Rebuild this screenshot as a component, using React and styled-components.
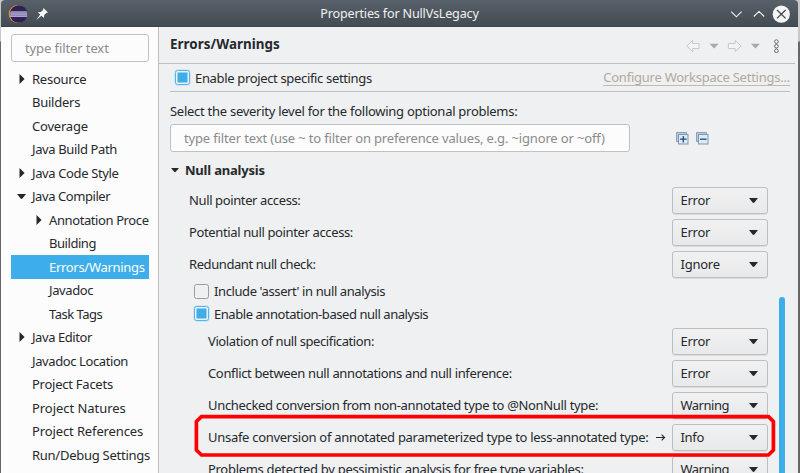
import React from "react";
import styled, { createGlobalStyle, css } from "styled-components";

const GlobalStyle = createGlobalStyle`
  *, *::before { box-sizing: border-box; }
  body { margin: 0; overflow: hidden; font-family: "Noto Sans", sans-serif; font-size: 13px; color: #26292c; }
`;

const Desktop = styled.div`
  width: 800px;
  height: 473px;
  overflow: hidden;
  padding: 0 2px 0 1px;
  background: linear-gradient(#c8c8c8 0 41px, #696765 42px);
`;

const Window = styled.div`
  position: relative;
  height: 473px;
  display: flex;
  flex-direction: column;
  overflow: hidden;
  border-radius: 4px 4px 0 0;
  background: #eff0f1;
`;

const TitleBar = styled.header`
  flex: none;
  display: grid;
  grid-template-columns: 100px 1fr 100px;
  align-items: center;
  height: 27px;
  background: linear-gradient(#586169, #434b53);
  border-bottom: 1px solid #3c4349;
  color: #eff0f1;
`;

const TitleIcons = styled.div`
  display: flex;
  align-items: center;
  gap: 8px;
  padding-left: 7px;
  svg { display: block; }
`;

const Title = styled.div`
  text-align: center;
  line-height: 27px;
  font-size: 12.6px;
  white-space: pre;
  letter-spacing: -0.18px;
`;

const WindowButtons = styled.div`
  display: flex;
  justify-content: flex-end;
  padding-right: 8px;
`;

const Body = styled.div`
  flex: 1;
  min-height: 0;
  display: grid;
  grid-template-columns: 158px 1fr;
`;

const Sidebar = styled.nav`
  min-width: 0;
  padding: 7px 9px 0 10px;
  background: #fcfcfc;
  border-right: 1px solid #bcbebf;
`;

const fieldStyle = css`
  height: 28px;
  border: 1px solid #bfc1c2;
  border-radius: 3px;
  background: #fcfcfc;
  color: #898b8c;
  line-height: 26px;
  padding-left: 13px;
  white-space: pre;
`;

const TreeFilter = styled.div`
  ${fieldStyle}
  width: 138px;
  letter-spacing: -0.1px;
`;

const Tree = styled.div`
  padding-top: 5.2px;
`;

const TreeRow = styled.div`
  display: flex;
  align-items: center;
  height: 23.5px;
  padding-left: ${(p) => 4 + p.$level * 17}px;
  background: ${(p) => (p.$selected ? "#3daee9" : "transparent")};
  color: ${(p) => (p.$selected ? "#fcfcfc" : "inherit")};
`;

const TwistySlot = styled.span`
  flex: none;
  display: flex;
  justify-content: center;
  width: 13px;
  margin-right: 4px;
`;

const Label = styled.span`
  white-space: pre;
  line-height: 20px;
  letter-spacing: ${(p) => p.$track || 0}px;
`;

const Page = styled.main`
  display: flex;
  flex-direction: column;
  min-width: 0;
`;

const PageHeader = styled.div`
  flex: none;
  display: flex;
  justify-content: space-between;
  height: 37px;
  margin-right: 3px;
  padding: 0 15px 0 11px;
  border-bottom: 1px solid #bcbebf;
`;

const PageTitle = styled.h1`
  margin: 0;
  font-size: 13.4px;
  font-weight: 700;
  line-height: 35px;
  letter-spacing: 0.05px;
`;

const ScopeRow = styled.div`
  flex: none;
  display: flex;
  align-items: center;
  justify-content: space-between;
  height: 28px;
  margin: 0 8px 0 11px;
  padding-left: 5px;
  border-bottom: 1px solid #bcbebf;
`;

const ConfigureLink = styled.span`
  line-height: 15px;
  color: #b1aa9c;
  border-bottom: 1px solid #c0bbb0;
  white-space: pre;
  letter-spacing: -0.24px;
`;

const CheckLine = styled.div`
  display: flex;
  align-items: center;
  gap: 5px;
  height: 22.5px;
`;

const CheckBox = styled.span`
  flex: none;
  display: block;
  width: 15px;
  height: 15px;
  padding: 2px;
  border: 1px solid ${(p) => (p.$checked ? "#53b5e9" : "#9a9c9e")};
  border-radius: 2.5px;
  box-shadow: ${(p) => (p.$checked ? "0 0 0 0.5px #b4dcf2" : "none")};
  &::before {
    content: "";
    display: block;
    width: 9px;
    height: 9px;
    background: ${(p) => (p.$checked ? "#3daee9" : "transparent")};
    box-shadow: ${(p) => (p.$checked ? "0 0 0 0.5px #3daee9" : "none")};
  }
`;

const Prompt = styled.div`
  flex: none;
  height: 32px;
  padding: 9px 0 0 11px;
`;

const FilterLine = styled.div`
  flex: none;
  display: flex;
  align-items: center;
  margin-left: 11px;
  height: 28px;
`;

const OptionFilter = styled.div`
  ${fieldStyle}
  width: 460px;
  margin-right: 45.5px;
  letter-spacing: -0.15px;
`;

const ScrollArea = styled.div`
  flex: 1;
  min-height: 0;
  display: grid;
  grid-template-columns: 609px 6px;
  column-gap: 11px;
  overflow: hidden;
`;

const Options = styled.div`
  padding: 6px 0 0 11px;
`;

const SectionHead = styled.div`
  display: flex;
  align-items: center;
  height: 23px;
  gap: 6px;
  padding-left: 1px;
  font-weight: 700;
`;

const Group = styled.div`
  padding: ${(p) => p.$pad};
`;

const OptionRow = styled.div`
  display: flex;
  align-items: center;
  height: 32px;
`;

const Arrow = styled.span`
  margin-left: 7px;
  display: flex;
`;

const Select = styled.div`
  flex: none;
  display: flex;
  align-items: center;
  justify-content: space-between;
  width: 96px;
  height: 27px;
  margin-left: auto;
  padding: 0 9px 0 7.5px;
  border: 1px solid #bcbebf;
  border-radius: 3px;
  background: linear-gradient(#f1f1f2, #e8e9ea);
  box-shadow: 0 1px 0 #dcdedf;
`;

const ScrollThumb = styled.div`
  margin-top: 145px;
  border-radius: 3px 3px 0 0;
  background: #3daee9;
`;

const Highlight = styled.svg`
  position: absolute;
  left: 192px;
  top: 412px;
  display: block;
`;

const Down = ({ w = 9, h = 5, fill = "#26292c" }) => (
  <svg width={w} height={h} viewBox="0 0 10 5" preserveAspectRatio="none"><path d="M0 0H10L6 4.6Q5 5.3 4 4.6Z" fill={fill} /></svg>
);
const Right = () => (
  <svg width="6" height="10" viewBox="0 0 6 10"><path d="M.5 0V10L5.6 5Z" fill="#26292c" /></svg>
);

const EclipseLogo = () => (
  <svg width="20" height="20" viewBox="0 0 20 20">
    <circle cx="9.6" cy="10" r="8.9" fill="#f3962c" />
    <circle cx="10.6" cy="10" r="8.8" fill="#2c2255" />
    <path d="M2.5 7.2H18.7L19.2 9.5V13H2Z" fill="#ada5c9" />
    <path d="M2 8.9H19.2M2 11.2H19.2" stroke="#756a9c" strokeWidth=".7" />
  </svg>
);

const Pin = () => (
  <svg width="12" height="12" viewBox="0 0 12 12">
    <path d="M7.4 0 12 4.6 10.3 5 8.2 7.1 8 10 5.4 7.8.2 12 4.2 6.6 1.8 4.3 4.9 4 7 1.9Z" fill="#f7f7f7" />
  </svg>
);

const WindowControls = () => (
  <svg width="64" height="26" viewBox="0 0 64 26" fill="none">
    <path d="M5.2 10.7 10.4 15.8 15.6 10.7M27.8 15.5 33 10.4 38.2 15.5" stroke="#f4f5f5" strokeWidth="1.1" />
    <circle cx="55.3" cy="13.2" r="8.6" fill="#f4f5f5" />
    <path d="M51 9 59.6 17.4M59.6 9 51 17.4" stroke="#3f474e" strokeWidth="1.3" />
  </svg>
);

const HistoryTools = () => (
  <svg width="94" height="36" viewBox="0 0 94 36" fill="none">
    <g stroke="#c8c9ca" fill="#f4f4f4">
      <path d="M.7 19 6.7 13.5V16.5H13V21.5H6.7V24.5Z" />
      <path d="M55.2 19 49.2 13.5V16.5H42.4V21.5H49.2V24.5Z" />
    </g>
    <path d="M23.6 16.8H32.6L28.1 21.6ZM64.9 16.8H73.9L69.4 21.6Z" fill="#a7a9aa" />
    <g stroke="#626466" fill="#fafafa">
      <circle cx="90.4" cy="14.6" r="1.8" /><circle cx="90.4" cy="19.2" r="1.8" /><circle cx="90.4" cy="23.8" r="1.8" />
    </g>
  </svg>
);

const BoxIcon = ({ plus }) => (
  <svg width="20.5" height="14" viewBox="0 0 20.5 14">
    <path d="M.5 10.5V1.5H10.5V4H3.5V10.5Z" fill="#b8ccdb" stroke="#8c9fb3" />
    <rect x="2.5" y="3.5" width="9.5" height="9.5" fill="#dcebf2" stroke="#8395b2" />
    <path d={plus ? "M4 8.2H10.6M7.3 5V11.5" : "M4 8.2H10.6"} stroke="#134f83" strokeWidth="1.3" />
  </svg>
);

const tree = [
  { text: "Resource", state: "closed", track: -0.25 },
  { text: "Builders", track: -0.25 },
  { text: "Coverage", track: -0.2 },
  { text: "Java Build Path", track: -0.37 },
  { text: "Java Code Style", state: "closed", track: -0.37 },
  { text: "Java Compiler", state: "open", track: -0.43 },
  { text: "Annotation Proce", level: 1, state: "closed", track: -0.4 },
  { text: "Building", level: 1, track: -0.45 },
  { text: "Errors/Warnings", level: 1, selected: true, track: -0.3 },
  { text: "Javadoc", level: 1, track: -0.4 },
  { text: "Task Tags", level: 1, track: -0.5 },
  { text: "Java Editor", state: "closed", track: -0.43 },
  { text: "Javadoc Location", track: -0.4 },
  { text: "Project Facets", track: -0.25 },
  { text: "Project Natures", track: -0.05 },
  { text: "Project References", track: -0.12 },
  { text: "Run/Debug Settings", track: -0.26 },
];

const general = [
  { text: "Null pointer access:", value: "Error", track: -0.38 },
  { text: "Potential null pointer access:", value: "Error", track: -0.37 },
  { text: "Redundant null check:", value: "Ignore", track: -0.42 },
];

const annotationBased = [
  { text: "Violation of null specification:", value: "Error", track: -0.4 },
  { text: "Conflict between null annotations and null inference:", value: "Error", track: -0.35 },
  { text: "Unchecked conversion from non-annotated type to @NonNull type:", value: "Warning", track: -0.33 },
  { text: "Unsafe conversion of annotated parameterized type to less-annotated type:", value: "Info", track: -0.29, changed: true },
  { text: "Problems detected by pessimistic analysis for free type variables:", value: "Warning", track: -0.3 },
];

const valueTrack = { Error: -0.25, Ignore: -0.25, Warning: -0.5, Info: -0.3 };

const SeverityRow = ({ text, value, track, changed }) => (
  <OptionRow>
    <Label $track={track}>{text}</Label>
    {changed && (
      <Arrow>
        <svg width="10" height="8" viewBox="0 0 10 8" fill="none" stroke="#26292c" strokeWidth="1.1">
          <path d="M0 4.5H8.5M5.6 1.6 8.6 4.5 5.6 7.4" />
        </svg>
      </Arrow>
    )}
    <Select><Label $track={valueTrack[value]}>{value}</Label><Down /></Select>
  </OptionRow>
);

export default function App() {
  return (
    <Desktop>
      <GlobalStyle />
      <Window>
        <TitleBar>
          <TitleIcons><EclipseLogo /><Pin /></TitleIcons>
          <Title>Properties for NullVsLegacy</Title>
          <WindowButtons><WindowControls /></WindowButtons>
        </TitleBar>
        <Body>
          <Sidebar>
            <TreeFilter>type filter text</TreeFilter>
            <Tree>
              {tree.map((n) => (
                <TreeRow key={n.text} $level={n.level || 0} $selected={n.selected}>
                  <TwistySlot>{n.state === "closed" && <Right />}{n.state === "open" && <Down />}</TwistySlot>
                  <Label $track={n.track}>{n.text}</Label>
                </TreeRow>
              ))}
            </Tree>
          </Sidebar>
          <Page>
            <PageHeader>
              <PageTitle>Errors/Warnings</PageTitle>
              <HistoryTools />
            </PageHeader>
            <ScopeRow>
              <CheckLine><CheckBox $checked /><Label $track={-0.34}>Enable project specific settings</Label></CheckLine>
              <ConfigureLink>Configure Workspace Settings...</ConfigureLink>
            </ScopeRow>
            <Prompt><Label $track={-0.27}>Select the severity level for the following optional problems:</Label></Prompt>
            <FilterLine>
              <OptionFilter>type filter text (use ~ to filter on preference values, e.g. ~ignore or ~off)</OptionFilter>
              <BoxIcon plus /><BoxIcon />
            </FilterLine>
            <ScrollArea>
              <Options>
                <SectionHead><Down w={8} h={4} /><Label $track={-0.2}>Null analysis</Label></SectionHead>
                <Group $pad="3px 0 0 19px">{general.map((o) => <SeverityRow key={o.text} {...o} />)}</Group>
                <Group $pad="0 0 0 24px">
                  <CheckLine><CheckBox /><Label $track={-0.4}>Include 'assert' in null analysis</Label></CheckLine>
                  <CheckLine><CheckBox $checked /><Label $track={-0.45}>Enable annotation-based null analysis</Label></CheckLine>
                </Group>
                <Group $pad="0 0 0 38px">{annotationBased.map((o) => <SeverityRow key={o.text} {...o} />)}</Group>
              </Options>
              <ScrollThumb />
            </ScrollArea>
          </Page>
        </Body>
        <Highlight width="584" height="48" viewBox="0 0 584 48">
          <path d="M8.5 4.6H575.5L580.4 9.5V38L575.5 43H8.5L3.4 38V9.5Z" fill="none" stroke="#ff0000" strokeWidth="3.7" />
        </Highlight>
      </Window>
    </Desktop>
  );
}
